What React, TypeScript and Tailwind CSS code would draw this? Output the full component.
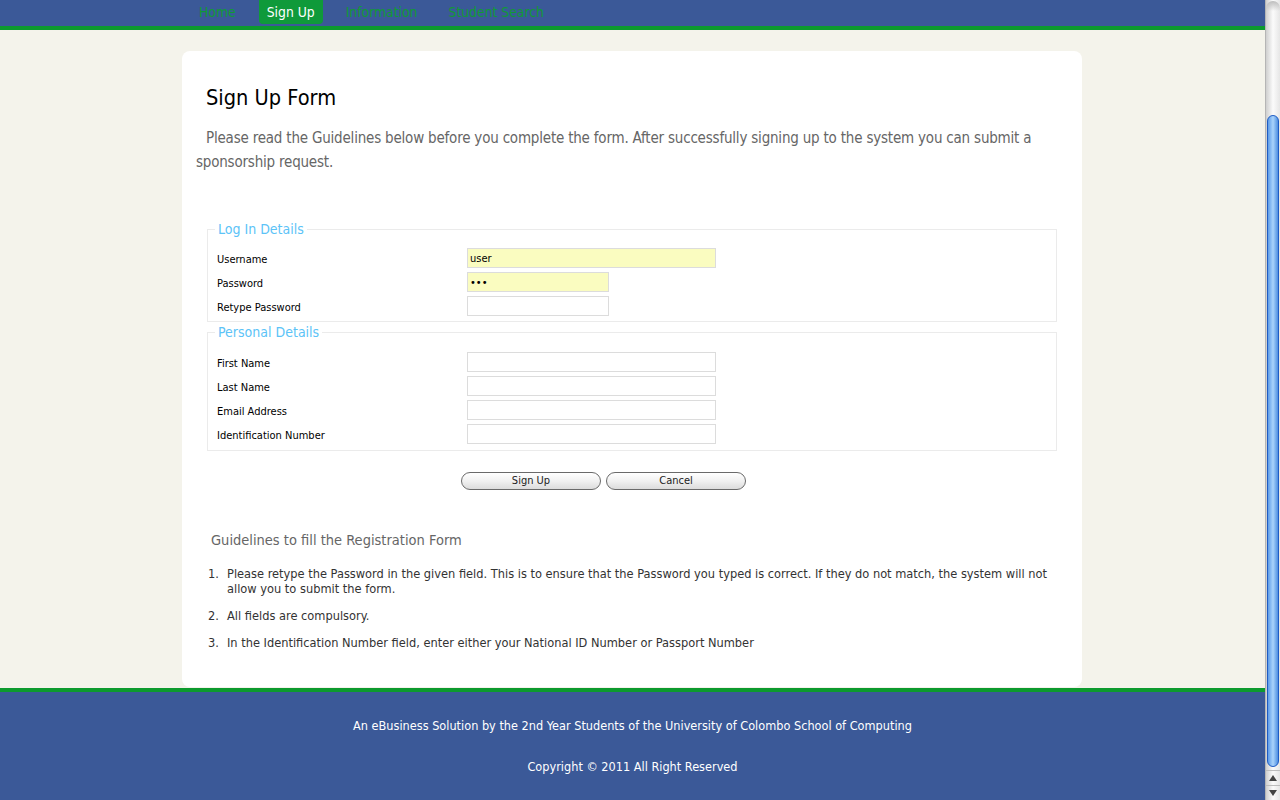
import React from "react";

const font = { fontFamily: '"DejaVu Sans Condensed", "DejaVu Sans", Verdana, sans-serif' };

const navItems = ["Home", "Sign Up", "Information", "Student Search"];

const loginRows = [
    { label: "Username", value: "user", wide: true, filled: true, type: "text" },
    { label: "Password", value: "abc", wide: false, filled: true, type: "password" },
    { label: "Retype Password", value: "", wide: false, filled: false, type: "password" },
];

const personalRows = ["First Name", "Last Name", "Email Address", "Identification Number"];

const guidelines = [
    "Please retype the Password in the given field. This is to ensure that the Password you typed is correct. If they do not match, the system will not allow you to submit the form.",
    "All fields are compulsory.",
    "In the Identification Number field, enter either your National ID Number or Passport Number",
];

function Row({
    label,
    value = "",
    wide = true,
    filled = false,
    type = "text",
}: {
    label: string;
    value?: string;
    wide?: boolean;
    filled?: boolean;
    type?: string;
}) {
    return (
        <div className="flex items-center h-[24px]">
            <label className="w-[250px] pt-[4px] text-[11px] text-black">{label}</label>
            <input
                type={type}
                defaultValue={value}
                readOnly
                className={`h-[20px] border border-[#dcdcdc] px-[2px] text-[11px] text-black outline-none ${
                    wide ? "w-[249px]" : "w-[142px]"
                } ${filled ? "bg-[#fafcc0]" : "bg-white"}`}
                style={font}
            />
        </div>
    );
}

function Fieldset({
    legend,
    top = "pt-[9px]",
    bottom = "pb-[3px]",
    children,
}: {
    legend: string;
    top?: string;
    bottom?: string;
    children: React.ReactNode;
}) {
    return (
        <fieldset className={`border border-[#ebebeb] pl-[7px] pr-[7px] ${bottom}`}>
            <legend className="px-[3px] text-[14px] leading-[16px] text-[#5cc3f7]">{legend}</legend>
            <div className={`${top} pl-[2px]`}>{children}</div>
        </fieldset>
    );
}

function Scrollbar() {
    return (
        <div className="w-[15px] h-[800px] flex flex-col bg-gradient-to-r from-[#cfcfcf] via-[#fbfbfb] to-[#e6e6e6] border-l border-[#b5b5b5]">
            <div className="flex-1 relative">
                <div className="absolute left-0 right-0 top-[1px] h-[10px] rounded-t-full bg-gradient-to-b from-[#bdbdbd] to-transparent" />
                <div className="absolute left-[1px] right-[1px] top-[115px] bottom-[3px] rounded-full border border-[#1e5cc4] bg-gradient-to-r from-[#5d9be8] via-[#a9d3fb] to-[#4d8ee0]" />
            </div>
            <div className="h-[15px] flex items-center justify-center border-t border-[#bdbdbd]">
                <div className="w-0 h-0 border-l-[4px] border-r-[4px] border-b-[6px] border-l-transparent border-r-transparent border-b-[#444]" />
            </div>
            <div className="h-[15px] flex items-center justify-center border-t border-[#bdbdbd]">
                <div className="w-0 h-0 border-l-[4px] border-r-[4px] border-t-[6px] border-l-transparent border-r-transparent border-t-[#444]" />
            </div>
        </div>
    );
}

export default function App() {
    return (
        <div className="flex w-[1280px] h-[800px] overflow-hidden bg-[#f4f3eb]" style={font}>
            <div className="flex-1 flex flex-col">
                {/* Nav */}
                <div className="h-[26px] bg-[#3b5998] flex items-start pl-[191px] gap-[15px]">
                    {navItems.map((item) => (
                        <span
                            key={item}
                            className={`h-[24px] px-[8px] flex items-center text-[13.8px] rounded-b-[4px] ${
                                item === "Sign Up" ? "bg-[#0f9a3a] text-white" : "text-[#109a36]"
                            }`}
                        >
                            {item}
                        </span>
                    ))}
                </div>
                <div className="h-[4px] bg-[#0c9a2e]" />

                {/* Card */}
                <div className="flex pl-[182px] pt-[21px]">
                    <div className="w-[900px] h-[636px] bg-white rounded-[8px] px-[14px] pt-[34px]">
                        <h1 className="pl-[10px] text-[21.6px] leading-[26px] text-black">Sign Up Form</h1>
                        <p className="mt-[15px] indent-[10px] text-[15px] leading-[24px] tracking-[-0.2px] text-[#666]">
                            Please read the Guidelines below before you complete the form. After successfully signing up to the
                            system you can submit a sponsorship request.
                        </p>

                        <div className="mt-[47px] ml-[11px] w-[850px]">
                            <Fieldset legend="Log In Details">
                                {loginRows.map((r) => (
                                    <Row key={r.label} {...r} />
                                ))}
                            </Fieldset>
                            <div className="mt-[2px]">
                                <Fieldset legend="Personal Details" top="pt-[10px]" bottom="pb-[4px]">
                                    {personalRows.map((l) => (
                                        <Row key={l} label={l} />
                                    ))}
                                </Fieldset>
                            </div>
                        </div>

                        <div className="flex gap-[5px] pl-[265px] mt-[21px]">
                            {["Sign Up", "Cancel"].map((b) => (
                                <button
                                    key={b}
                                    className="w-[140px] h-[18px] rounded-full border border-[#6a6a6a] bg-gradient-to-b from-white via-[#f1f1f1] to-[#dcdcdc] text-[11px] leading-[16px] text-[#222]"
                                    style={font}
                                >
                                    {b}
                                </button>
                            ))}
                        </div>

                        <h2 className="mt-[41px] pl-[15px] text-[14.5px] leading-[18px] text-[#666]">
                            Guidelines to fill the Registration Form
                        </h2>
                        <ol className="mt-[17px] pl-[12px] pr-[10px] text-[12.7px] leading-[15px] text-[#333]">
                            {guidelines.map((g, i) => (
                                <li key={g} className="flex mb-[12px]">
                                    <span className="w-[19px] shrink-0">{i + 1}.</span>
                                    <span>{g}</span>
                                </li>
                            ))}
                        </ol>
                    </div>
                </div>

                {/* Footer */}
                <div className="mt-[1px] h-[4px] bg-[#0c9a2e]" />
                <div className="flex-1 bg-[#3b5998] flex flex-col items-center pt-[26px] text-[12.6px] leading-[15px] text-white">
                    <p>An eBusiness Solution by the 2nd Year Students of the University of Colombo School of Computing</p>
                    <p className="mt-[26px]">Copyright © 2011 All Right Reserved</p>
                </div>
            </div>
            <Scrollbar />
        </div>
    );
}
